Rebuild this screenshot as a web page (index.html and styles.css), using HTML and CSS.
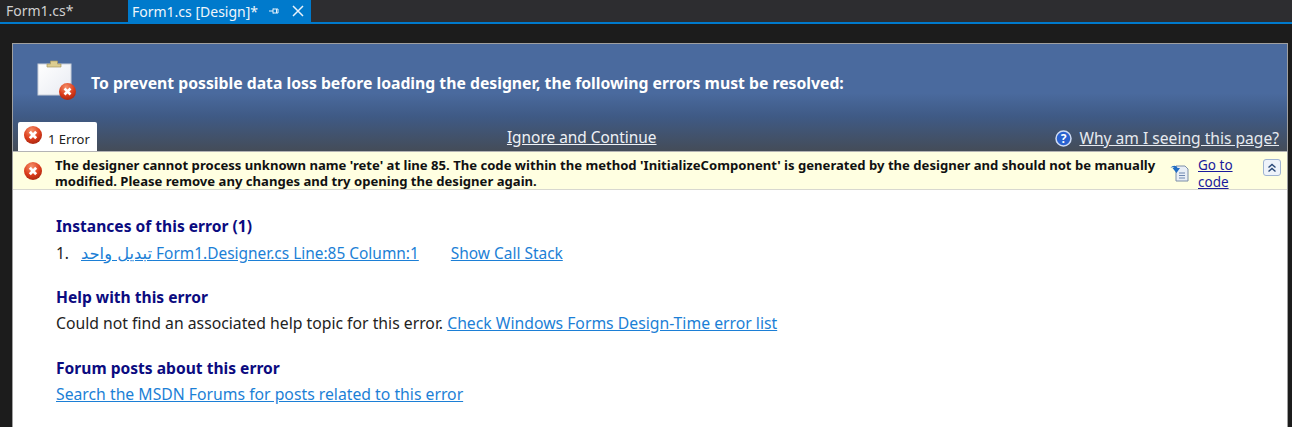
FILE: index.html
```html
<!DOCTYPE html>
<html lang="en">
<head>
<meta charset="utf-8">
<title>Form1.cs [Design]</title>
<link rel="stylesheet" href="styles.css">
</head>
<body>
<div class="tabbar">
  <div class="tab">Form1.cs*</div>
  <div class="tab active">
    <span>Form1.cs [Design]*</span>
    <svg class="pin" width="12" height="10" viewBox="0 0 12 10"><path d="M1 5h4M5 2.500v5M5 3h5v4H5M8.500 3v4" fill="none" stroke="#e8f2fb" stroke-width="1"/></svg>
    <svg class="close" width="12" height="12" viewBox="0 0 12 12"><path d="M1 1l10 10M11 1L1 11" fill="none" stroke="#e8f2fb" stroke-width="1.500"/></svg>
  </div>
</div>
<div class="rule"></div>
<main class="panel">
  <header class="banner">
    <div class="headline">
      <svg class="clip" width="39" height="42" viewBox="0 0 39 42">
        <defs>
          <linearGradient id="sheet" x1="0" y1="0" x2="1" y2="1"><stop offset="0" stop-color="#ffffff"/><stop offset="1" stop-color="#e8ebf2"/></linearGradient>
          <radialGradient id="red1" cx=".42" cy=".25" r=".85"><stop offset="0" stop-color="#f4906a"/><stop offset=".55" stop-color="#dc3d1c"/><stop offset="1" stop-color="#9c200c"/></radialGradient>
        </defs>
        <rect x="1" y="5" width="33" height="31" fill="url(#sheet)" stroke="#c9cfd9"/>
        <path d="M10 8V5h3.500V2h7v3H24v3z" fill="#dccd90" stroke="#a89a62" stroke-width=".7"/>
        <circle cx="30.500" cy="32.500" r="8.500" fill="url(#red1)"/>
        <path d="M27.500 29.500l6 6M33.500 29.500l-6 6" stroke="#fff" stroke-width="2.600"/>
      </svg>
      <h1>To prevent possible data loss before loading the designer, the following errors must be resolved:</h1>
    </div>
    <div class="tabrow">
      <div class="errtab">
        <svg width="18" height="18" viewBox="0 0 18 18"><circle cx="9" cy="9" r="9" fill="url(#red1)"/><path d="M5.800 5.800l6.400 6.400M12.200 5.800l-6.400 6.400" stroke="#fff" stroke-width="2.800"/></svg>
        <span>1 Error</span>
      </div>
      <a class="ignore" href="#">Ignore and Continue</a>
      <div class="why">
        <svg width="17" height="17" viewBox="0 0 17 17"><circle cx="8.500" cy="8.500" r="7.500" fill="#2a62d0" stroke="#cfdcf5" stroke-width="1.500"/><text x="8.500" y="12.500" text-anchor="middle" class="qmark">?</text></svg>
        <a href="#">Why am I seeing this page?</a>
      </div>
    </div>
  </header>
  <section class="notice">
    <svg class="noticeicon" width="18" height="18" viewBox="0 0 18 18"><circle cx="9" cy="9" r="9" fill="url(#red1)"/><path d="M5.800 5.800l6.400 6.400M12.200 5.800l-6.400 6.400" stroke="#fff" stroke-width="2.800"/></svg>
    <p>The designer cannot process unknown name 'rete' at line 85. The code within the method 'InitializeComponent' is generated by the designer and should not be manually modified. Please remove any changes and try opening the designer again.</p>
    <svg class="gotoicon" width="19" height="19" viewBox="0 0 19 19"><path d="M6 3h9l3 3v12H6z" fill="#e8eef6" stroke="#7d8fa8"/><path d="M9 10h6M9 12.500h6M9 15h6" stroke="#6f88b0"/><path d="M0.500 5c2-3 6-3 7 0h2.500l-3.500 5-4-5h2c-1-1-3-1-4 0z" fill="#1f6cc4"/></svg>
    <a class="goto" href="#">Go to code</a>
    <button class="collapse" type="button"><svg width="12" height="12" viewBox="0 0 12 12"><path d="M2.500 5.500L6 2.500l3.500 3M2.500 9.500L6 6.500l3.500 3" fill="none" stroke="#2b4a78" stroke-width="1.400"/></svg></button>
  </section>
  <section class="details">
    <div class="block">
      <h2>Instances of this error (1)</h2>
      <div class="line first"><span class="num">1.</span><a href="#"><span class="arabic" lang="ar" dir="rtl">تبديل واحد</span> Form1.Designer.cs Line:85 Column:1</a><a class="stack" href="#">Show Call Stack</a></div>
    </div>
    <div class="block">
      <h2>Help with this error</h2>
      <div class="line">Could not find an associated help topic for this error. <a class="inline" href="#">Check Windows Forms Design-Time error list</a></div>
    </div>
    <div class="block">
      <h2>Forum posts about this error</h2>
      <div class="line"><a href="#">Search the MSDN Forums for posts related to this error</a></div>
    </div>
  </section>
</main>
</body>
</html>
```
FILE: styles.css
```css
* { box-sizing: border-box; }
html, body { margin: 0; height: 100%; overflow: hidden; }
body {
  background: #1c1c1c;
  font-family: "Noto Sans", "Noto Sans CJK SC", sans-serif;
  font-size: 14px;
  color: #111;
}
.tabbar {
  display: flex;
  height: 22px;
  background: #2d2d30;
  color: #d0d0d0;
}
.tab {
  width: 128px;
  padding-left: 6px;
  font-size: 14px;
  line-height: 21px;
  background: #252526;
}
.tab.active {
  width: 183px;
  padding-left: 4px;
  background: #007acc;
  color: #f0f6fb;
  display: flex;
  align-items: center;
}
.pin { margin-left: 10px; }
.close { margin-left: 12px; }
.rule { height: 2px; background: #007acc; }
.panel {
  margin: 19px 0 0 12px;
  width: 1276px;
  height: 400px;
  background: #fff;
  border: 1px solid #a0a0a0;
  border-bottom: 0;
}
.banner {
  height: 107px;
  background: linear-gradient(#4a6a9e 0, #4a6a9e 46%, #3f5a85 68%, #444c58 100%);
  display: flex;
  flex-direction: column;
  justify-content: space-between;
}
.headline {
  display: flex;
  align-items: center;
  padding: 15px 0 0 24px;
}
.clip { flex: none; }
h1 {
  margin: 6px 0 0 15px;
  font-size: 15.750px;
  font-weight: 700;
  color: #fff;
  white-space: nowrap;
}
.tabrow {
  height: 30px;
  display: flex;
  align-items: flex-end;
  padding: 0 8px 0 5px;
  justify-content: space-between;
}
.errtab {
  width: 79px;
  height: 29px;
  background: #fff;
  border-radius: 2px 2px 0 0;
  padding: 4px 0 0 6px;
  display: flex;
  gap: 6px;
  font-size: 13px;
  line-height: 26px;
  color: #222;
}
.ignore {
  color: #eef1f6;
  font-size: 15.400px;
  line-height: 26px;
  margin-left: 11px;
}
.why {
  display: flex;
  align-items: center;
  gap: 7px;
  font-size: 15.600px;
  line-height: 26px;
}
.why a { color: #e6eaf0; }
.qmark { font: 700 12px "Noto Sans", sans-serif; fill: #fff; }
.notice {
  height: 39px;
  background: #ffffe1;
  border-top: 1px solid #b4b4b4;
  border-bottom: 1px solid #d8d8d0;
  display: flex;
  align-items: flex-start;
  position: relative;
}
.noticeicon { margin: 10px 0 0 11px; flex: none; }
.notice p {
  margin: 5px 0 0 13px;
  width: 1105px;
  font-size: 13.100px;
  font-weight: 700;
  line-height: 16px;
  color: #111;
  flex: none;
}
.gotoicon { margin: 11px 0 0 10px; flex: none; }
.goto {
  margin: 5px 0 0 9px;
  width: 50px;
  font-size: 13.500px;
  line-height: 17px;
  color: #1a1a9c;
}
.collapse {
  position: absolute;
  right: 6px;
  top: 7px;
  width: 18px;
  height: 17px;
  padding: 0 2px;
  background: #eef3fa;
  border: 1px solid #9fb4d2;
  border-radius: 3px;
  display: flex;
  align-items: center;
  justify-content: center;
}
.details { padding: 26px 0 0 43px; }
.block { margin-bottom: 25px; }
.block:first-child { margin-bottom: 24px; }
h2 {
  margin: 0;
  font-size: 15.600px;
  font-weight: 700;
  line-height: 20px;
  color: #0b0b80;
}
.line {
  margin-top: 6px;
  font-size: 15.750px;
  line-height: 20px;
  color: #222;
  white-space: nowrap;
}
.line.first { margin-top: 7px; font-size: 15.450px; }
.line a { color: #1c7fd6; }
.arabic { font-family: "DejaVu Sans", sans-serif; font-size: 16.300px; line-height: 1; }
.num { display: inline-block; width: 25px; }
.line .stack { margin-left: 32px; }
```
